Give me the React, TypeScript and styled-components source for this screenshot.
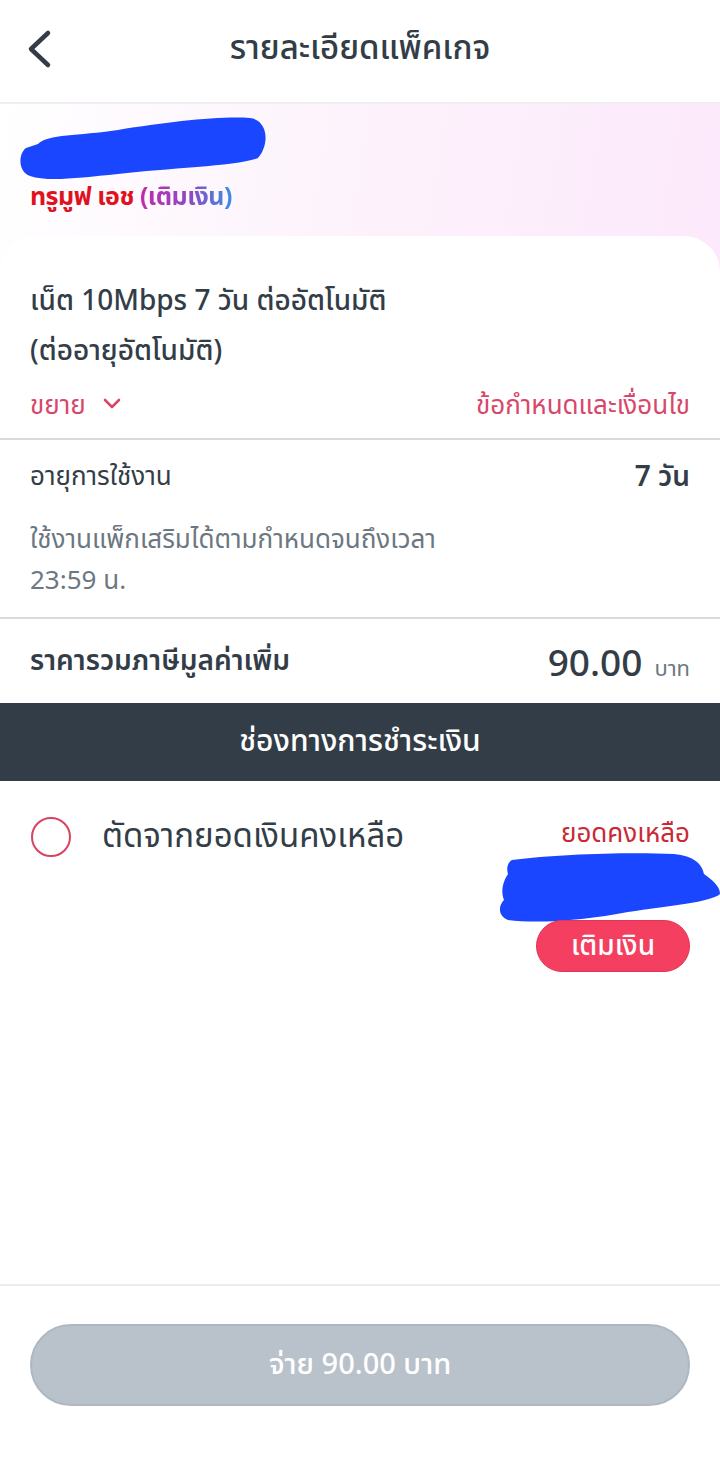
import styled, { createGlobalStyle } from "styled-components";

const GlobalStyle = createGlobalStyle`
  html, body {
    margin: 0;
    padding: 0;
    background: #ffffff;
  }
  body {
    font-family: "Noto Sans", "Noto Sans Thai", "Liberation Sans", sans-serif;
    color: #333d47;
  }
  * {
    box-sizing: border-box;
  }
`;

const Page = styled.div`
  width: 720px;
  height: 1462px;
  display: flex;
  flex-direction: column;
  background: #ffffff;
`;

const Header = styled.header`
  height: 104px;
  display: grid;
  grid-template-columns: 80px 1fr 80px;
  align-items: center;
  border-bottom: 2px solid #eeeef0;
  padding-bottom: 4px;
`;

const BackButton = styled.button`
  border: none;
  background: none;
  padding: 0 0 0 24px;
  display: flex;
  align-items: center;
  color: #333d47;
`;

const HeaderTitle = styled.h1`
  margin: 0;
  text-align: center;
  font-size: 33px;
  font-weight: 500;
  color: #333d47;
`;

const Hero = styled.section`
  background: linear-gradient(100deg, #ffffff 0%, #fdf4fc 40%, #fce8fb 100%);
  padding: 10px 0 0;
`;

const Operator = styled.div`
  padding: 0 18px;
  display: flex;
  flex-direction: column;
`;

const Brand = styled.div`
  padding-left: 12px;
  margin-top: -2px;
  font-size: 25px;
  font-weight: 700;
  line-height: 30px;
  letter-spacing: -0.5px;
`;

const BrandRed = styled.span`
  color: #e0121f;
`;

const BrandPrepaid = styled.span`
  background: linear-gradient(90deg, #c42aa7 0%, #8a4cc6 55%, #3c8fe0 100%);
  -webkit-background-clip: text;
  background-clip: text;
  color: transparent;
`;

const Card = styled.div`
  margin-top: 26px;
  background: #ffffff;
  border-radius: 36px 36px 0 0;
`;

const PackageBlock = styled.div`
  padding: 38px 30px 0;
  border-bottom: 2px solid #d9d9dc;
`;

const PackageName = styled.div`
  font-size: 28px;
  font-weight: 500;
  line-height: 50px;
  color: #333d47;
`;

const LinkRow = styled.div`
  display: flex;
  justify-content: space-between;
  align-items: center;
  height: 64px;
  padding: 14px 0 18px;
`;

const PinkLink = styled.span`
  display: flex;
  align-items: center;
  gap: 16px;
  font-size: 26px;
  line-height: 32px;
  color: #d8476b;
`;

const InfoBlock = styled.div`
  padding: 20px 30px 17px;
  border-bottom: 2px solid #d9d9dc;
`;

const InfoRow = styled.div`
  display: flex;
  justify-content: space-between;
  align-items: center;
  height: 34px;
`;

const Label = styled.span<{ $bold?: boolean }>`
  font-size: ${(p) => (p.$bold ? "28px" : "26px")};
  font-weight: ${(p) => (p.$bold ? 600 : 400)};
  color: #333d47;
`;

const Value = styled.span`
  font-size: 28px;
  font-weight: 600;
  color: #333d47;
`;

const Note = styled.p`
  margin: 24px 0 0;
  font-size: 26px;
  line-height: 41px;
  color: #6c7781;
`;

const PriceRow = styled.div`
  display: flex;
  justify-content: space-between;
  align-items: center;
  height: 84px;
  padding: 0 30px;
`;

const Price = styled.span`
  font-size: 37px;
  font-weight: 500;
  color: #333d47;
  display: flex;
  align-items: baseline;
  gap: 12px;
`;

const Unit = styled.span`
  font-size: 22px;
  color: #6c7781;
  font-weight: 400;
`;

const SectionBar = styled.div`
  height: 78px;
  background: #323d47;
  color: #ffffff;
  display: flex;
  align-items: center;
  justify-content: center;
  font-size: 30px;
  font-weight: 500;
`;

const PaymentRow = styled.div`
  display: flex;
  justify-content: space-between;
  padding: 33px 30px 0 31px;
  flex: 1;
`;

const PaymentLeft = styled.label`
  display: flex;
  align-items: center;
  gap: 31px;
  height: 46px;
  font-size: 33px;
  color: #333d47;
`;

const Radio = styled.span`
  width: 40px;
  height: 40px;
  border-radius: 50%;
  border: 2px solid #d9435f;
  flex-shrink: 0;
`;

const BalanceColumn = styled.div`
  display: flex;
  flex-direction: column;
  align-items: flex-end;
  margin-right: -30px;
`;

const BalanceLabel = styled.span`
  font-size: 26px;
  color: #c92a36;
  margin-right: 30px;
  line-height: 36px;
`;

const TopUpButton = styled.button`
  margin: -6px 30px 0 0;
  width: 154px;
  height: 52px;
  border: 1px solid #e0355a;
  border-radius: 26px;
  background: #f43f60;
  color: #ffffff;
  font-family: inherit;
  font-size: 28px;
  font-weight: 500;
  padding: 0;
`;

const Footer = styled.footer`
  border-top: 2px solid #ececee;
  padding: 38px 30px 56px;
`;

const PayButton = styled.button`
  width: 100%;
  height: 82px;
  border: 2px solid #aeb8c1;
  border-radius: 41px;
  background: #b9c2ca;
  color: #ffffff;
  font-family: inherit;
  font-size: 29px;
  font-weight: 500;
`;

const Scribble = ({ w, h, d }: { w: number; h: number; d: string }) => (
  <svg width={w} height={h} viewBox={`0 0 ${w} ${h}`}>
    <path d={d} fill="#1b46ff" />
  </svg>
);

export default function App() {
  return (
    <Page>
      <GlobalStyle />
      <Header>
        <BackButton aria-label="back">
          <svg width="30" height="40" viewBox="0 0 30 40">
            <path
              d="M24 4 L7 20 L24 36"
              fill="none"
              stroke="#333d47"
              strokeWidth="4.5"
              strokeLinecap="round"
              strokeLinejoin="round"
            />
          </svg>
        </BackButton>
        <HeaderTitle>รายละเอียดแพ็คเกจ</HeaderTitle>
        <span />
      </Header>

      <Hero>
        <Operator>
          <Scribble
            w={252}
            h={68}
            d="M20 30 C30 20 60 22 100 16 C150 8 200 2 232 4 C250 6 252 30 240 44 C220 52 150 54 100 60 C60 64 30 68 12 62 C0 58 0 40 8 34 Z"
          />
          <Brand>
            <BrandRed>ทรูมูฟ เอช </BrandRed>
            <BrandPrepaid>(เติมเงิน)</BrandPrepaid>
          </Brand>
        </Operator>

        <Card>
          <PackageBlock>
            <PackageName>
              เน็ต 10Mbps 7 วัน ต่ออัตโนมัติ
              <br />
              (ต่ออายุอัตโนมัติ)
            </PackageName>
            <LinkRow>
              <PinkLink>
                ขยาย
                <svg width="20" height="14" viewBox="0 0 20 14">
                  <path
                    d="M3 3 L10 10 L17 3"
                    fill="none"
                    stroke="#d8476b"
                    strokeWidth="2.6"
                    strokeLinecap="round"
                    strokeLinejoin="round"
                  />
                </svg>
              </PinkLink>
              <PinkLink>ข้อกำหนดและเงื่อนไข</PinkLink>
            </LinkRow>
          </PackageBlock>
        </Card>
      </Hero>

      <InfoBlock>
        <InfoRow>
          <Label>อายุการใช้งาน</Label>
          <Value>7 วัน</Value>
        </InfoRow>
        <Note>
          ใช้งานแพ็กเสริมได้ตามกำหนดจนถึงเวลา
          <br />
          23:59 น.
        </Note>
      </InfoBlock>

      <PriceRow>
        <Label $bold>ราคารวมภาษีมูลค่าเพิ่ม</Label>
        <Price>
          90.00 <Unit>บาท</Unit>
        </Price>
      </PriceRow>

      <SectionBar>ช่องทางการชำระเงิน</SectionBar>

      <PaymentRow>
        <PaymentLeft>
          <Radio />
          ตัดจากยอดเงินคงเหลือ
        </PaymentLeft>
        <BalanceColumn>
          <BalanceLabel>ยอดคงเหลือ</BalanceLabel>
          <Scribble
            w={222}
            h={76}
            d="M14 10 C60 4 130 2 176 4 C196 6 204 14 206 24 C214 30 222 36 222 44 C214 52 170 56 130 62 C90 70 40 74 10 70 C0 66 0 56 6 50 C2 40 6 30 10 24 C8 18 10 12 14 10 Z"
          />
          <TopUpButton>เติมเงิน</TopUpButton>
        </BalanceColumn>
      </PaymentRow>

      <Footer>
        <PayButton disabled>จ่าย 90.00 บาท</PayButton>
      </Footer>
    </Page>
  );
}
